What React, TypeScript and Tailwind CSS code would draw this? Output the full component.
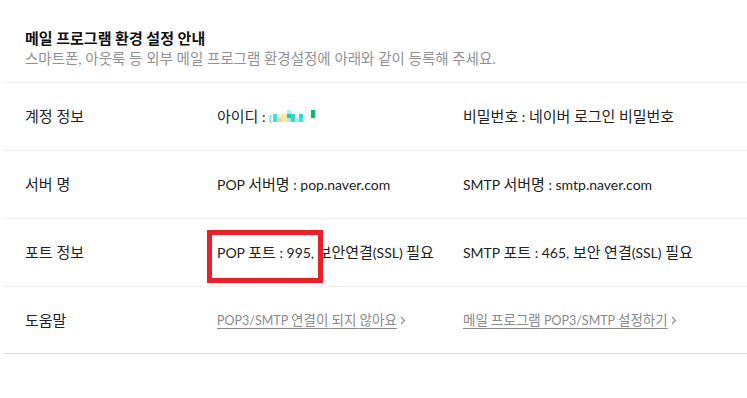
import React from 'react';

const font = { fontFamily: 'Lato, "Noto Sans CJK KR", sans-serif' };

// Hangul runs get a slightly larger size so they match the wider Korean face of the original
function Mixed({ text, ko }: { text: string; ko: string }) {
  const parts = text.split(/([가-힣]+)/);
  return (
    <>
      {parts.map((p, i) =>
        /[가-힣]/.test(p) ? (
          <span key={i} className={ko}>
            {p}
          </span>
        ) : (
          <React.Fragment key={i}>{p}</React.Fragment>
        )
      )}
    </>
  );
}

function BlurredId() {
  return (
    <svg width="48" height="14" viewBox="0 0 48 14" className="inline-block align-middle">
      <text x="0" y="12" fontSize="10" fill="#2ecc40">(</text>
      <rect x="4" y="4" width="4" height="8" fill="#3fe0e0" />
      <rect x="8" y="4" width="5" height="4" fill="#f6f0c0" />
      <rect x="8" y="8" width="5" height="4" fill="#d8dc9c" />
      <rect x="13" y="4" width="5" height="8" fill="#fde7a4" />
      <rect x="18" y="0" width="4" height="4" fill="#9ff0f8" />
      <rect x="18" y="4" width="4" height="4" fill="#10d0c0" />
      <rect x="18" y="8" width="4" height="4" fill="#a0f0f0" />
      <rect x="22" y="4" width="4" height="4" fill="#30d4c8" />
      <rect x="22" y="8" width="4" height="4" fill="#5ccdb4" />
      <rect x="26" y="8" width="4" height="4" fill="#a5f0f2" />
      <rect x="30" y="4" width="4" height="4" fill="#28d8d2" />
      <rect x="30" y="8" width="4" height="4" fill="#45e0de" />
      <rect x="42" y="0" width="4" height="8" fill="#00c060" />
    </svg>
  );
}

function Cell({ value }: { value: React.ReactNode }) {
  if (typeof value === 'string') return <Mixed text={value} ko="text-[15px]" />;
  return <>{value}</>;
}

function Row({ label, left, right, last }: { label: string; left: React.ReactNode; right: React.ReactNode; last?: boolean }) {
  return (
    <div className={`flex items-center h-[68px] border-t border-[#f0f0f0] ${last ? 'border-b border-b-[#dcdcdc]' : ''}`}>
      <div className="w-[213px] pl-[21px] text-[15px] text-[#222]">{label}</div>
      <div className="w-[246px] text-[14px] text-[#222] whitespace-nowrap">
        <Cell value={left} />
      </div>
      <div className="flex-1 text-[14px] text-[#222] whitespace-nowrap">
        <Cell value={right} />
      </div>
    </div>
  );
}

function HelpLink({ text }: { text: string }) {
  return (
    <span className="inline-flex items-center gap-[3px] text-[12.5px] text-[#8a8a8a]">
      <span className="underline underline-offset-[3px] decoration-[#8a8a8a]">
        <Mixed text={text} ko="text-[13.5px]" />
      </span>
      <svg width="6" height="9" viewBox="0 0 6 9" fill="none">
        <path d="M1 1l3.5 3.5L1 8" stroke="#8a8a8a" strokeWidth="1.1" />
      </svg>
    </span>
  );
}

export default function App() {
  return (
    <div className="w-[747px] h-[398px] bg-white relative" style={font}>
      <div className="ml-[4px]">
        <div className="pl-[21px] pt-[28px] pb-[13px]">
          <h1 className="text-[15px] font-bold text-[#111] leading-[20px]">메일 프로그램 환경 설정 안내</h1>
          <p className="text-[14.5px] text-[#929294] leading-[20px] mt-[1px]">
            스마트폰, 아웃룩 등 외부 메일 프로그램 환경설정에 아래와 같이 등록해 주세요.
          </p>
        </div>
        <Row
          label="계정 정보"
          left={
            <span className="inline-flex items-center">
              <span className="text-[15px]">아이디</span>&nbsp;:&nbsp;
              <BlurredId />
            </span>
          }
          right="비밀번호 : 네이버 로그인 비밀번호"
        />
        <Row label="서버 명" left="POP 서버명 : pop.naver.com" right="SMTP 서버명 : smtp.naver.com" />
        <Row label="포트 정보" left="POP 포트 : 995, 보안연결(SSL) 필요" right="SMTP 포트 : 465, 보안 연결(SSL) 필요" />
        <Row
          label="도움말"
          left={<HelpLink text="POP3/SMTP 연결이 되지 않아요" />}
          right={<HelpLink text="메일 프로그램 POP3/SMTP 설정하기" />}
          last
        />
      </div>
      <div className="absolute left-[207px] top-[230px] w-[116px] h-[53px] border-[5px] border-[#e8202a]" />
    </div>
  );
}
